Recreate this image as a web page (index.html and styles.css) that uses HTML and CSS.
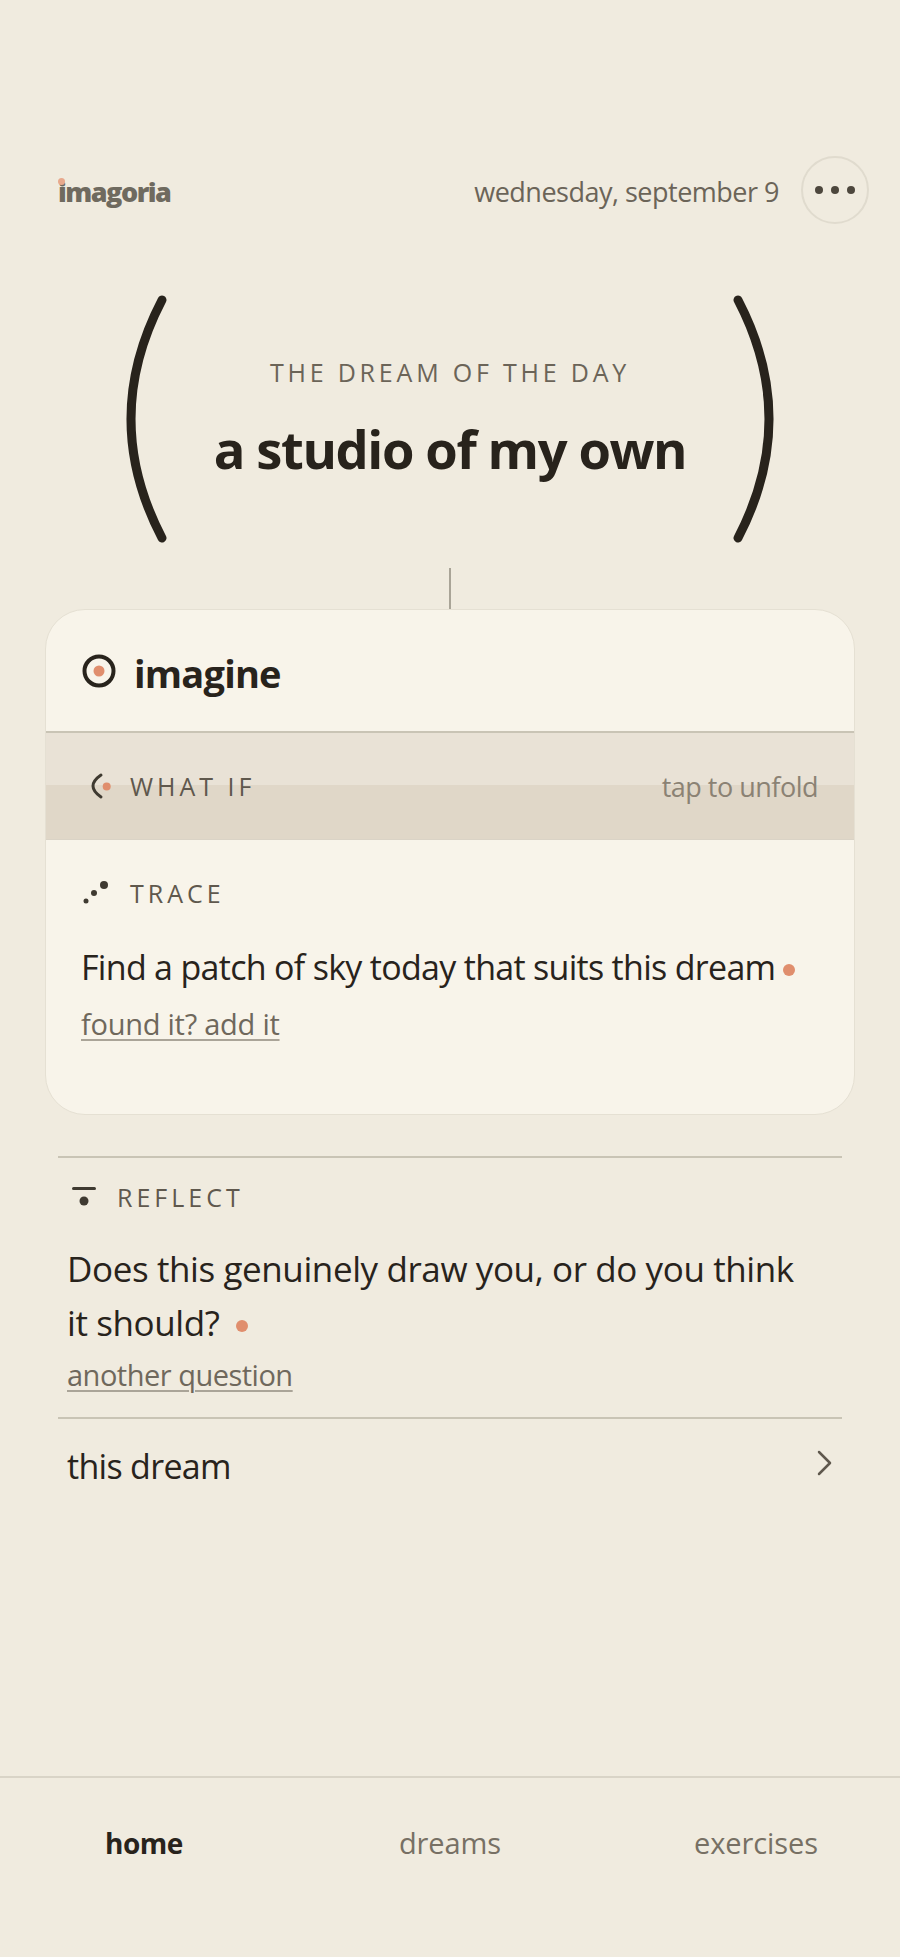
FILE: index.html
```html
<!DOCTYPE html>
<html lang="en">
<head>
    <meta charset="UTF-8">
    <meta name="viewport" content="width=device-width, initial-scale=1.0">
    <title>imagoria</title>
    <link rel="stylesheet" href="styles.css">
</head>
<body>
    <div class="page">
        <header class="top">
            <div class="logo"><span class="logo-dot"></span>imagoria</div>
            <div class="top-right">
                <span class="date">wednesday, september 9</span>
                <button class="menu" type="button" aria-label="menu"><i></i><i></i><i></i></button>
            </div>
        </header>

        <section class="hero">
            <svg class="bracket" width="52" height="250" viewBox="0 0 52 250"><path d="M37 6 Q-25 125 37 244" /></svg>
            <div class="hero-text">
                <div class="hero-label">THE DREAM OF THE DAY</div>
                <h1>a studio of my own</h1>
            </div>
            <svg class="bracket" width="52" height="250" viewBox="0 0 52 250"><path d="M15 6 Q77 125 15 244" /></svg>
        </section>
        <div class="stem"></div>

        <section class="card">
            <div class="card-head">
                <svg width="34" height="34" viewBox="0 0 34 34"><circle cx="17" cy="17" r="14.5" fill="none" stroke="#28231c" stroke-width="4" /><circle cx="17" cy="17" r="5.5" fill="#e08e6d" /></svg>
                <h2>imagine</h2>
            </div>
            <div class="fold">
                <div class="tag">
                    <svg class="tag-icon" width="28" height="28" viewBox="0 0 28 28"><path d="M12 3 Q-4 14 12 25" fill="none" stroke="#3f3a31" stroke-width="3" stroke-linecap="round" /><circle cx="17.7" cy="14.5" r="4" fill="#e08e6d" /></svg>
                    <span>WHAT IF</span>
                </div>
                <span class="fold-hint">tap to unfold</span>
            </div>
            <div class="trace">
                <div class="tag">
                    <svg class="tag-icon" width="28" height="28" viewBox="0 0 28 28"><circle cx="5" cy="22" r="2.5" fill="#3f3a31" /><circle cx="13" cy="14" r="3" fill="#3f3a31" /><circle cx="23" cy="6" r="4" fill="#3f3a31" /></svg>
                    <span>TRACE</span>
                </div>
                <p class="body-text">Find a patch of sky today that suits this dream<span class="dot"></span></p>
                <a class="link" href="#">found it? add it</a>
            </div>
        </section>

        <section class="reflect">
            <div class="tag">
                <svg class="tag-icon" width="28" height="28" viewBox="0 0 28 28"><rect x="2" y="4" width="24" height="3" rx="1.5" fill="#3f3a31" /><circle cx="14" cy="18" r="4.5" fill="#3f3a31" /></svg>
                <span>REFLECT</span>
            </div>
            <p class="body-text">Does this genuinely draw you, or do you think<br>it should?<span class="dot"></span></p>
            <a class="link" href="#">another question</a>
        </section>

        <a class="row" href="#">
            <span>this dream</span>
            <svg width="16" height="26" viewBox="0 0 16 26"><path d="M2 2 L13 13 L2 24" fill="none" stroke="#5f584d" stroke-width="2.5" stroke-linecap="round" stroke-linejoin="round" /></svg>
        </a>

        <nav class="nav">
            <a class="active" href="#">home</a>
            <a href="#">dreams</a>
            <a href="#">exercises</a>
        </nav>
    </div>
</body>
</html>
```

FILE: styles.css
```css
* {
    box-sizing: border-box;
}
body {
    margin: 0;
    background-color: #f0ebdf;
    color: #28231c;
    font-family: "Open Sans", sans-serif;
}
h1, h2, p {
    margin: 0;
}
.page {
    height: 1957px;
    display: flex;
    flex-direction: column;
    overflow: hidden;
}

/* top bar */
.top {
    display: flex;
    justify-content: space-between;
    align-items: center;
    height: 68px;
    margin-top: 156px;
    padding: 0 31px 0 58px;
}
.logo {
    position: relative;
    padding-top: 2px;
    font-size: 27px;
    font-weight: 800;
    color: #6f6a5f;
    letter-spacing: -1.5px;
}
.logo-dot {
    position: absolute;
    left: 0;
    top: 7px;
    width: 7px;
    height: 7px;
    border-radius: 50%;
    background-color: #e8a98d;
}
.top-right {
    display: flex;
    align-items: center;
    gap: 22px;
}
.date {
    padding-top: 2px;
    font-size: 27px;
    letter-spacing: -0.5px;
    color: #6b6458;
}
.menu {
    display: flex;
    justify-content: center;
    align-items: center;
    gap: 8px;
    width: 68px;
    height: 68px;
    padding: 0;
    border: 2px solid #e0dbce;
    border-radius: 50%;
    background: none;
}
.menu i {
    width: 8px;
    height: 8px;
    border-radius: 50%;
    background-color: #4d473d;
}

/* dream of the day */
.hero {
    display: flex;
    justify-content: center;
    margin-top: 70px;
}
.bracket path {
    fill: none;
    stroke: #28231c;
    stroke-width: 9;
    stroke-linecap: round;
}
.hero-text {
    width: 546px;
    text-align: center;
}
.hero-label {
    margin-top: 61px;
    font-size: 25px;
    line-height: 34px;
    letter-spacing: 3.8px;
    color: #6b6458;
}
.hero h1 {
    margin-top: 25px;
    font-size: 52.5px;
    line-height: 70px;
    letter-spacing: -1.4px;
    font-weight: 700;
}
.stem {
    width: 2px;
    height: 41px;
    margin: 24px auto 0;
    background-color: #a9a497;
}

/* card */
.card {
    margin: 0 45px;
    border: 1px solid #e5e0d3;
    border-radius: 40px;
    background-color: #f8f4ea;
    overflow: hidden;
}
.card-head {
    display: flex;
    align-items: center;
    gap: 18px;
    height: 123px;
    padding: 0 36px;
    border-bottom: 2px solid #c9c4b5;
}
.card-head h2 {
    padding-top: 5px;
    font-size: 38px;
    letter-spacing: -0.8px;
    font-weight: 700;
}
.fold {
    display: flex;
    justify-content: space-between;
    align-items: center;
    height: 107px;
    padding: 0 36px 0 43px;
    background: linear-gradient(#e9e2d6 52px, #e0d7c8 52px);
    border-bottom: 1px solid #dad3c6;
}
.fold .tag {
    gap: 13px;
}
.fold-hint {
    font-size: 27px;
    letter-spacing: -0.5px;
    color: #8b8274;
}
.tag {
    display: flex;
    align-items: center;
    gap: 11px;
    font-size: 25px;
    letter-spacing: 4px;
    color: #5f584d;
}
.trace {
    height: 274px;
    padding: 36px 35px 0;
}
.trace .tag {
    gap: 21px;
    margin-bottom: 30px;
}
.body-text {
    font-size: 34px;
    line-height: 54px;
    letter-spacing: -0.7px;
}
.dot {
    display: inline-block;
    width: 12px;
    height: 12px;
    margin-left: 8px;
    border-radius: 50%;
    background-color: #e08e6d;
    vertical-align: 4px;
}
.link {
    display: inline-block;
    margin-top: 10px;
    font-size: 29px;
    letter-spacing: -0.25px;
    color: #6f685c;
    text-decoration: underline;
    text-decoration-color: #aaa498;
    text-decoration-thickness: 2px;
    text-underline-offset: 4px;
}

/* reflect */
.reflect {
    margin: 41px 58px 0;
    padding: 22px 9px 23px;
    border-top: 2px solid #c9c4b5;
    border-bottom: 2px solid #c9c4b5;
}
.reflect .tag {
    gap: 19px;
    margin-bottom: 28px;
    padding-left: 3px;
}
.reflect .body-text {
    font-size: 35px;
    letter-spacing: -0.4px;
}
.reflect .dot {
    margin-left: 17px;
}
.reflect .link {
    margin-top: 5px;
    letter-spacing: -0.5px;
}
.row {
    display: flex;
    justify-content: space-between;
    align-items: center;
    margin: 0 58px;
    padding: 24px 9px;
    font-size: 34px;
    letter-spacing: -0.7px;
    color: #28231c;
    text-decoration: none;
}
.row svg {
    margin-bottom: 6px;
}

/* bottom nav */
.nav {
    display: grid;
    grid-template-columns: repeat(3, 306px);
    justify-content: center;
    justify-items: center;
    align-items: center;
    height: 181px;
    margin-top: auto;
    padding-bottom: 50px;
    border-top: 2px solid #d9d4c7;
}
.nav a {
    font-size: 29px;
    letter-spacing: -0.1px;
    color: #777064;
    text-decoration: none;
}
.nav a.active {
    font-size: 28px;
    letter-spacing: -0.5px;
    color: #28231c;
    font-weight: 700;
}
```
